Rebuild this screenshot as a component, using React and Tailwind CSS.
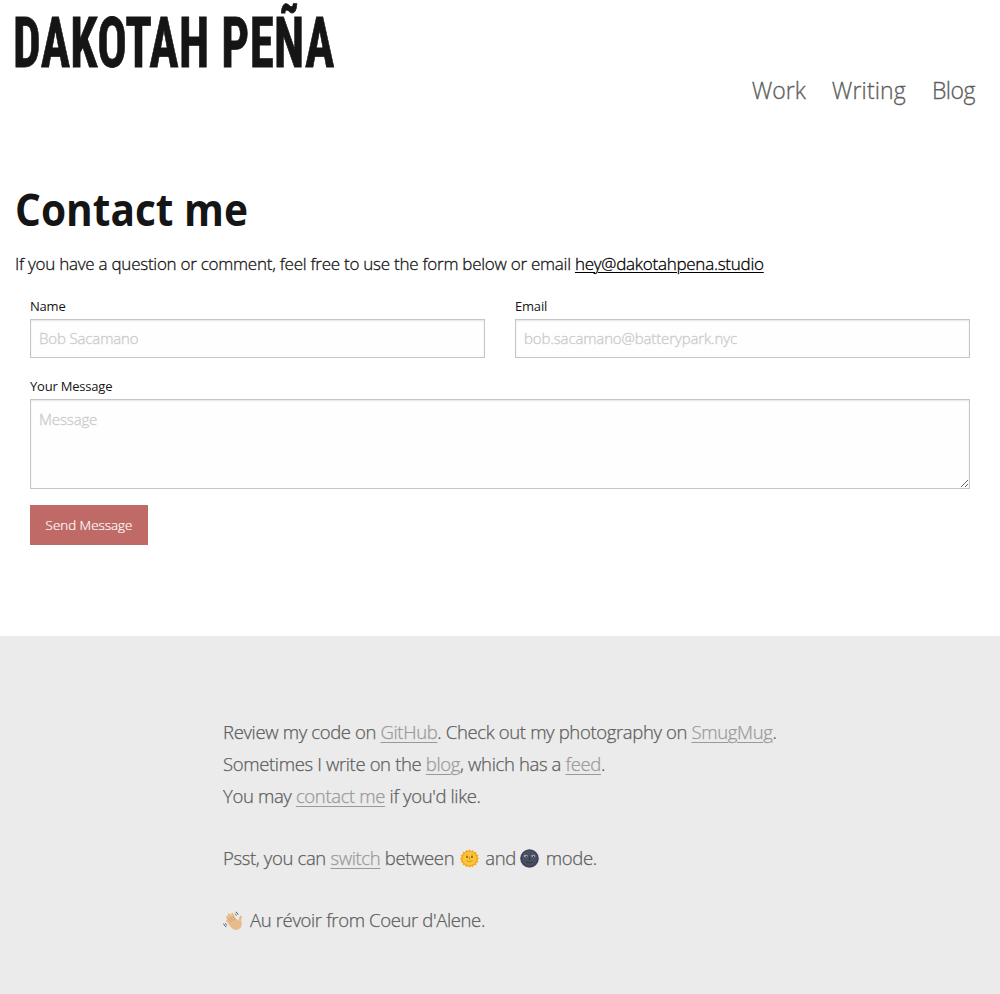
const link = "text-[#999] underline decoration-1 underline-offset-[3px]";

function SunFace() {
  return (
    <svg viewBox="0 0 20 20" className="mr-[6px] ml-[6px] inline-block size-[19px] align-[-3px]">
      <path
        fill="#f5a81c"
        d="M10 .3l1.6 2 2.2-1.3.7 2.4 2.7-.4-.1 2.6 2.5.7-1.2 2.2 1.7 1.5-1.8 1.7 1.1 2.2-2.4.7.1 2.6-2.6-.3-.8 2.4-2.2-1.2-1.5 1.6-1.6-1.7-2.2 1.3-.8-2.4-2.5.3.2-2.6-2.5-.7L1.5 12 0 10l1.8-1.6L.7 6.2l2.5-.7-.2-2.6 2.6.4.8-2.4 2.1 1.3z"
      />
      <circle cx="10" cy="10" r="7.2" fill="#fdc639" />
      <ellipse cx="7.4" cy="8.5" rx=".9" ry="1.1" fill="#6b4310" />
      <ellipse cx="12.6" cy="8.5" rx=".9" ry="1.1" fill="#6b4310" />
      <path d="M7 12.4q3 2.2 6 0M10 8.5v2.3" fill="none" stroke="#c9791f" strokeWidth=".8" strokeLinecap="round" />
      <path d="M6 6.7q1.3-.9 2.4-.2M14 6.7q-1.3-.9-2.4-.2" fill="none" stroke="#c98018" strokeWidth=".7" />
    </svg>
  );
}

function MoonFace() {
  return (
    <svg viewBox="0 0 20 20" className="mr-[7px] ml-[4px] inline-block size-[19px] align-[-3px]">
      <circle cx="10" cy="10" r="9.8" fill="#3d4354" />
      <circle cx="10" cy="9.4" r="8" fill="#4a5064" />
      <ellipse cx="6" cy="7.4" rx="2.2" ry="1.4" fill="#a0a6b4" />
      <ellipse cx="14" cy="7.4" rx="2.2" ry="1.4" fill="#a0a6b4" />
      <circle cx="6.6" cy="7.7" r=".7" fill="#14161d" />
      <circle cx="14.2" cy="7.7" r=".7" fill="#14161d" />
      <path d="M10 8v3.4M6.5 13.8q3.5 1.8 7 0" fill="none" stroke="#2b3040" strokeWidth=".9" strokeLinecap="round" />
    </svg>
  );
}

function WavingHand() {
  return (
    <svg viewBox="0 0 20 20" className="mr-[7px] inline-block size-[20px] align-[-4px]">
      <g fill="none" stroke="#e8bb8d" strokeWidth="2.6" strokeLinecap="round">
        <path d="M9.5 12L4.2 6.2M10.5 10.5L6 3.9M12 9.5L9.2 3.2M9 14.5l-4.6-4.7" />
        <path d="M16.8 12q-.6-3 1-6" />
      </g>
      <path d="M7 11.5L12.6 7l3.3 3.2 1.6-1.6c1.9 3.4 1.9 6.9-.7 9-2.8 2.2-6.3 1.5-8.6-1l-2.2-2.4z" fill="#e8bb8d" />
      <path d="M8.4 11L5 7.3M10 9.8L7.3 5.8M11.8 8.8L9.8 5" fill="none" stroke="#b97f4e" strokeWidth=".5" />
      <path d="M12.6 1q2 .7 2.6 2.8M11.8 2.8q1.2.5 1.6 1.8M.6 12.7q.6 2.4 2.7 3.2M2.3 12.2q.4 1.4 1.7 2.1" fill="none" stroke="#5d6066" strokeWidth="1" />
    </svg>
  );
}

const label = "block text-[13px] leading-[25px] tracking-[-0.2px]";
const field =
  "block w-full rounded-none border border-[#c6c6c6] bg-[#fefefe] px-2 text-[15px] font-light tracking-[-0.13px] shadow-[inset_0_1px_2px_rgba(10,10,10,0.1)] outline-none placeholder:text-[#cacaca] placeholder:[-webkit-text-stroke:0.3px_#cacaca]";

export default function App() {
  return (
    <div className="flex h-[994px] flex-col bg-white font-['Open_Sans',sans-serif] text-[#151515]">
      <header className="flex h-[110px] flex-col px-[15px]">
        <h1 className="-ml-[2px] h-[72px] w-[460px] origin-left scale-x-[0.692] pt-[4px] text-[71px] leading-[78px] font-bold tracking-[0.55px] whitespace-nowrap [-webkit-text-stroke:0.8px] [font-family:'Roboto_Condensed',Roboto,sans-serif] [font-stretch:75%]">
          DAKOTAH PEÑA
        </h1>
        <nav className="flex justify-end gap-[26px] pr-[10px] text-[23px] leading-[37px] font-light text-[#5d5d5d] [-webkit-text-stroke:0.3px_#5d5d5d]">
          <a>Work</a>
          <a className="tracking-[0.15px]">Writing</a>
          <a className="tracking-[-0.5px]">Blog</a>
        </nav>
      </header>

      <main className="flex h-[526px] flex-col px-[15px] pt-[65px]">
        <h2 className="w-max origin-left scale-x-[0.903] text-[45px] leading-[67px] font-bold">Contact me</h2>
        <p className="mt-[6px] text-[17px] leading-[32px] font-light tracking-[-0.255px] whitespace-nowrap [-webkit-text-stroke:0.3px]">
          If you have a question or comment, feel free to use the form below or email{" "}
          <a className="text-black underline decoration-1 underline-offset-[2px]">hey@dakotahpena.studio</a>
        </p>
        <form className="flex flex-col px-[15px] pt-[14px]">
          <div className="grid grid-cols-2 gap-[30px]">
            <label>
              <span className={label}>Name</span>
              <input className={`${field} h-[39px] pb-[2px]`} placeholder="Bob Sacamano" />
            </label>
            <label>
              <span className={label}>Email</span>
              <input className={`${field} h-[39px] pb-[2px]`} placeholder="bob.sacamano@batterypark.nyc" />
            </label>
          </div>
          <label className="mt-4">
            <span className={label}>Your Message</span>
            <textarea className={`${field} h-[90px] resize py-[7px] leading-[24px]`} placeholder="Message" />
          </label>
          <button
            type="button"
            className="mt-4 h-10 w-[118px] bg-[#bf6a67] text-[13.4px] font-light text-[#fefefe] [-webkit-text-stroke:0.2px]"
          >
            Send Message
          </button>
        </form>
      </main>

      <footer className="flex h-[358px] flex-col gap-[30px] bg-[#ebebeb] pt-[80px] pl-[223px] text-[18.5px] leading-[32px] font-light tracking-[-0.36px] whitespace-nowrap text-[#5d5d5d] [-webkit-text-stroke:0.25px]">
        <p>
          Review my code on <a className={link}>GitHub</a>. Check out my photography on{" "}
          <a className={link}>SmugMug</a>.<br />
          Sometimes I write on the <a className={link}>blog</a>, which has a <a className={link}>feed</a>.<br />
          You may <a className={link}>contact me</a> if you'd like.
        </p>
        <p className="h-8">
          Psst, you can <a className={link}>switch</a> between
          <SunFace />
          and
          <MoonFace />
          mode.
        </p>
        <p className="h-8">
          <WavingHand />
          Au révoir from Coeur d'Alene.
        </p>
      </footer>
    </div>
  );
}
